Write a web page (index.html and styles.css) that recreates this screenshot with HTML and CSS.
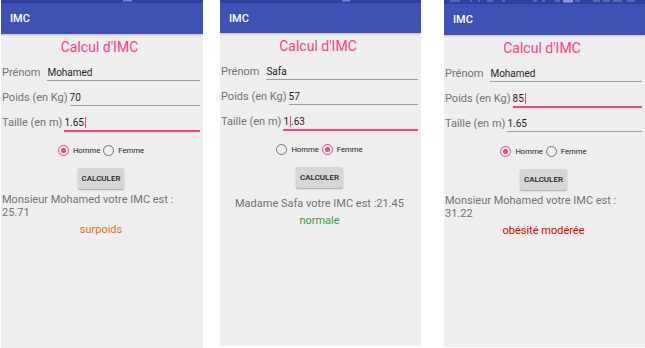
FILE: index.html
```html
<!DOCTYPE html>
<html lang="fr">
<head>
<meta charset="utf-8">
<title>IMC</title>
<link rel="stylesheet" href="styles.css">
</head>
<body>
<div class="sheet">
  <section class="phone p1">
    <div class="status"><svg class="status-icons" width="202" height="3" viewBox="0 0 202 3"><rect x="122" y="0" width="9" height="1.5" fill="#7a86c8"/></svg></div>
    <div class="toolbar">IMC</div>
    <div class="content">
      <h1 class="title">Calcul d'IMC</h1>
      <div class="row"><span class="label wide">Prénom</span><span class="field">Mohamed</span></div>
      <div class="row"><span class="label">Poids (en Kg)</span><span class="field">70</span></div>
      <div class="row"><span class="label">Taille (en m)</span><span class="field focus">1.65<i class="caret"></i></span></div>
      <div class="radios">
        <span class="radio on"></span><span class="rtext">Homme</span>
        <span class="radio"></span><span class="rtext">Femme</span>
      </div>
      <div class="btn-wrap"><span class="btn">CALCULER</span></div>
      <div class="result-wrap"><p class="result">Monsieur Mohamed votre IMC est : 25.71</p></div>
      <p class="cat surpoids">surpoids</p>
    </div>
  </section>

  <section class="phone p2">
    <div class="status"><svg class="status-icons" width="201" height="3" viewBox="0 0 201 3"><rect x="122" y="0" width="8" height="1.5" fill="#7a86c8"/></svg></div>
    <div class="toolbar">IMC</div>
    <div class="content">
      <h1 class="title">Calcul d'IMC</h1>
      <div class="row"><span class="label wide">Prénom</span><span class="field">Safa</span></div>
      <div class="row"><span class="label">Poids (en Kg)</span><span class="field">57</span></div>
      <div class="row"><span class="label">Taille (en m)</span><span class="field focus">1<i class="caret"></i>.63</span></div>
      <div class="radios">
        <span class="radio"></span><span class="rtext">Homme</span>
        <span class="radio on"></span><span class="rtext">Femme</span>
      </div>
      <div class="btn-wrap"><span class="btn">CALCULER</span></div>
      <div class="result-wrap"><p class="result">Madame Safa votre IMC est :21.45</p></div>
      <p class="cat normale">normale</p>
    </div>
  </section>

  <section class="phone p3">
    <div class="status"><svg class="status-icons" width="201" height="4" viewBox="0 0 201 4">
      <g fill="#5b68b0">
        <rect x="6" y="0" width="10" height="2"/>
        <rect x="26" y="0" width="2" height="2"/>
        <rect x="34" y="0" width="2" height="2"/>
        <rect x="43" y="0" width="6" height="2"/>
        <rect x="58" y="0" width="3" height="2"/>
        <rect x="89" y="0" width="4" height="2"/>
        <rect x="98" y="0" width="3" height="2"/>
        <rect x="111" y="0" width="5" height="2"/>
        <rect x="131" y="0" width="5" height="2"/>
        <rect x="149" y="0" width="7" height="2"/>
        <rect x="159" y="0" width="7" height="2"/>
        <rect x="169" y="0" width="9" height="2"/>
        <rect x="183" y="0" width="8" height="2"/>
      </g>
      <rect x="119" y="0" width="10" height="2.5" fill="#8f98cf"/>
    </svg></div>
    <div class="toolbar">IMC</div>
    <div class="content">
      <h1 class="title">Calcul d'IMC</h1>
      <div class="row"><span class="label wide">Prénom</span><span class="field">Mohamed</span></div>
      <div class="row"><span class="label">Poids (en Kg)</span><span class="field focus">85<i class="caret"></i></span></div>
      <div class="row"><span class="label">Taille (en m)</span><span class="field">1.65</span></div>
      <div class="radios">
        <span class="radio on"></span><span class="rtext">Homme</span>
        <span class="radio"></span><span class="rtext">Femme</span>
      </div>
      <div class="btn-wrap"><span class="btn">CALCULER</span></div>
      <div class="result-wrap"><p class="result">Monsieur Mohamed votre IMC est : 31.22</p></div>
      <p class="cat obese">obésité modérée</p>
    </div>
  </section>
</div>
</body>
</html>
```

FILE: styles.css
```css
html, body {
  margin: 0;
  padding: 0;
  background: #ffffff;
}

body {
  font-family: Roboto, "Noto Sans", "Liberation Sans", sans-serif;
}

.sheet {
  display: flex;
  align-items: flex-start;
  padding-left: 1px;
}

.phone {
  background: #eeeeee;
  display: flex;
  flex-direction: column;
  width: 202px;
  height: 348px;
  overflow: hidden;
}

.p1 {
  margin-right: 17px;
}

.p2 {
  width: 201px;
  height: 346px;
  margin-right: 23px;
}

.p3 {
  width: 201px;
  height: 347px;
}

.status {
  height: 3px;
  background: #303f9f;
  display: flex;
}

.p3 .status {
  height: 4px;
}

.status-icons {
  display: block;
}

.toolbar {
  height: 31px;
  background: #3f51b5;
  color: #ffffff;
  font-size: 11px;
  font-weight: 500;
  display: flex;
  align-items: center;
  padding-left: 9px;
  box-shadow: 0 1px 2px rgba(0, 0, 0, 0.22);
  position: relative;
  z-index: 1;
}

.p2 .toolbar {
  height: 30px;
}

.content {
  display: flex;
  flex-direction: column;
  padding: 0 3px 0 1px;
}

.title {
  margin: 4px 0 0;
  padding-right: 3px;
  font-size: 14px;
  font-weight: 400;
  line-height: 18px;
  color: #ff4081;
  text-align: center;
}

.row {
  display: flex;
  align-items: flex-start;
  margin-top: 8px;
  line-height: 15px;
}

.row:first-of-type {
  margin-top: 8.5px;
}

.label {
  font-size: 11px;
  color: #737373;
  padding-right: 2px;
  white-space: nowrap;
}

.label.wide {
  padding-right: 7px;
}

.field {
  flex: 1;
  font-size: 10px;
  color: #1f1f1f;
  border-bottom: 1px solid #9e9e9e;
  margin-bottom: 1px;
  white-space: nowrap;
}

.field.focus {
  border-bottom: 2px solid #ff4081;
  margin-bottom: 0;
}

.caret {
  display: inline-block;
  width: 1px;
  height: 11px;
  background: #ff4081;
  vertical-align: middle;
  margin-left: 1px;
}

.radios {
  display: flex;
  justify-content: center;
  align-items: center;
  margin-top: 13px;
  height: 12px;
  font-size: 7.7px;
  color: #212121;
}

.radio {
  width: 11px;
  height: 11px;
  box-sizing: border-box;
  border: 1.5px solid #737373;
  border-radius: 50%;
  display: flex;
  align-items: center;
  justify-content: center;
  margin-right: 4px;
}

.radio.on {
  border-color: #ff4081;
}

.radio.on::after {
  content: "";
  width: 5px;
  height: 5px;
  border-radius: 50%;
  background: #ff4081;
}

.rtext + .radio {
  margin-left: 3px;
}

.btn-wrap {
  display: flex;
  justify-content: center;
  margin-top: 11.5px;
}

.btn {
  background: #d6d6d6;
  border-radius: 2px;
  box-shadow: 0 1px 1.5px rgba(0, 0, 0, 0.3);
  font-size: 8px;
  font-weight: 500;
  line-height: 21px;
  padding: 0 4px;
  color: #212121;
}

.result-wrap {
  text-align: center;
  margin-top: 3.5px;
}

.result {
  display: inline-block;
  text-align: left;
  margin: 0;
  font-size: 11px;
  line-height: 13px;
  color: #737373;
}

.cat {
  margin: 3px 0 0;
  text-align: center;
  font-size: 11px;
  line-height: 13px;
}

.surpoids {
  color: #f06a1e;
}

.normale {
  color: #3f9a3f;
}

.obese {
  color: #e00000;
}
```
